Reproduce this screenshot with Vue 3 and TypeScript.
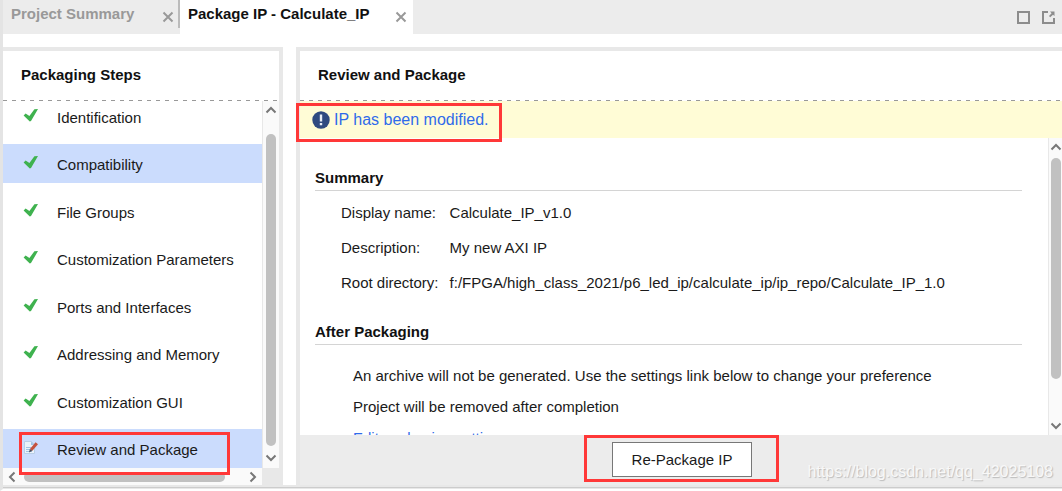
<script setup lang="ts">
import { ref } from 'vue'

interface Step {
  name: string
  done: boolean
}

const steps: Step[] = [
  { name: 'Identification', done: true },
  { name: 'Compatibility', done: true },
  { name: 'File Groups', done: true },
  { name: 'Customization Parameters', done: true },
  { name: 'Ports and Interfaces', done: true },
  { name: 'Addressing and Memory', done: true },
  { name: 'Customization GUI', done: true },
  { name: 'Review and Package', done: false },
]

const highlighted = ref<string[]>(['Compatibility', 'Review and Package'])

const summary = [
  { label: 'Display name:', value: 'Calculate_IP_v1.0' },
  { label: 'Description:', value: 'My new AXI IP' },
  { label: 'Root directory:', value: 'f:/FPGA/high_class_2021/p6_led_ip/calculate_ip/ip_repo/Calculate_IP_1.0' },
]

function select(name: string) {
  highlighted.value = [name]
}
</script>

<template>
  <div class="window">
    <header class="tabs">
      <div class="tab">
        <button class="tab-name">Project Summary</button>
        <button class="icon-btn close" aria-label="Close Project Summary">
          <svg width="12" height="12" viewBox="0 0 12 12"><path d="M1.5 1.5l9 9M10.5 1.5l-9 9" /></svg>
        </button>
      </div>
      <div class="tab active">
        <button class="tab-name">Package IP - Calculate_IP</button>
        <button class="icon-btn close" aria-label="Close Package IP">
          <svg width="12" height="12" viewBox="0 0 12 12"><path d="M1.5 1.5l9 9M10.5 1.5l-9 9" /></svg>
        </button>
      </div>
      <div class="tools">
        <button class="icon-btn" aria-label="Maximize">
          <svg width="13" height="13" viewBox="0 0 13 13"><path d="M1 1h11v11H1z" /></svg>
        </button>
        <button class="icon-btn" aria-label="Float">
          <svg width="13" height="13" viewBox="0 0 13 13">
            <path d="M6 1H1v11h11V7" />
            <path class="solid" d="M8 0.5h4.5V5L11 3.8 8.2 6.2 7 5l2.6-2.8z" />
          </svg>
        </button>
      </div>
    </header>

    <main class="panels">
      <section class="panel steps">
        <h2>Packaging Steps</h2>
        <div class="scroll-row">
          <div class="viewport">
            <ul>
              <li v-for="step in steps" :key="step.name">
                <button class="step" :class="{ on: highlighted.includes(step.name) }" @click="select(step.name)">
                  <svg v-if="step.done" width="16" height="16" viewBox="0 0 16 16">
                    <path fill="#3fb24f" d="M.6 7.400L2.600 5.500 6.400 8l5-6.700 3.600-.2L8 13l-1.200.6z" />
                  </svg>
                  <svg v-else width="16" height="16" viewBox="0 0 16 16">
                    <path fill="#e9f2fa" stroke="#b9cfe6" d="M1.5 1.5h7l3 3v9h-10z" />
                    <path fill="#9fc3e4" d="M8 1.5v3.5h3.5zM3 7h5v1H3zM3 9h4v1H3zM3 11h6v1H3z" />
                    <path fill="#c4523d" d="M12.6 2.2l2.4 2-5.6 6.6-2.5-1.9z" />
                    <path fill="#4e4a55" d="M6.9 8.9l2.5 1.9L6 12.6z" />
                  </svg>
                  <span>{{ step.name }}</span>
                </button>
              </li>
            </ul>
          </div>
          <div class="vbar">
            <svg width="12" height="8" viewBox="0 0 12 8"><path d="M1.5 6.5L6 2l4.500 4.500" /></svg>
            <i class="thumb"></i>
            <svg width="12" height="8" viewBox="0 0 12 8"><path d="M1.500 1.500L6 6l4.500-4.500" /></svg>
          </div>
        </div>
        <div class="hbar">
          <div class="track">
            <svg width="8" height="12" viewBox="0 0 8 12"><path d="M6.500 1.500L2 6l4.500 4.500" /></svg>
            <i class="thumb"></i>
            <svg width="8" height="12" viewBox="0 0 8 12"><path d="M1.500 1.500L6 6l-4.500 4.500" /></svg>
          </div>
        </div>
        <i class="mark mark-step"></i>
      </section>

      <section class="panel review">
        <h2>Review and Package</h2>
        <div class="banner">
          <svg width="18" height="18" viewBox="0 0 18 18">
            <circle cx="9" cy="9" r="8.700" fill="#2f4a80" />
            <path fill="#e8edf5" d="M7.800 3.500h2.400v7H7.800zM7.800 12h2.400v2.300H7.800z" />
          </svg>
          <a href="#">IP has been modified.</a>
          <i class="mark mark-banner"></i>
        </div>
        <div class="scroll-row">
          <div class="viewport body">
            <h3>Summary</h3>
            <dl>
              <template v-for="row in summary" :key="row.label">
                <dt>{{ row.label }}</dt>
                <dd>{{ row.value }}</dd>
              </template>
            </dl>
            <h3>After Packaging</h3>
            <div class="notes">
              <p>An archive will not be generated. Use the settings link below to change your preference</p>
              <p>Project will be removed after completion</p>
              <p><a href="#">Edit packaging settings</a></p>
            </div>
          </div>
          <div class="vbar">
            <svg width="12" height="8" viewBox="0 0 12 8"><path d="M1.500 6.500L6 2l4.500 4.500" /></svg>
            <i class="thumb"></i>
            <svg width="12" height="8" viewBox="0 0 12 8"><path d="M1.500 1.500L6 6l4.500-4.500" /></svg>
          </div>
        </div>
        <footer>
          <div class="action">
            <button class="primary">Re-Package IP</button>
            <i class="mark mark-action"></i>
          </div>
          <span class="watermark">https://blog.csdn.net/qq_42025108</span>
        </footer>
      </section>
    </main>
    <div class="base"></div>
  </div>
</template>

<style>
body {
  background: #fff;
}
</style>

<style scoped>
* {
  box-sizing: border-box;
}

.window {
  display: flex;
  flex-direction: column;
  height: 100vh;
  border-left: 3px solid #e4e4e4;
  border-bottom: 2px solid #fff;
  background: #fff;
  color: #1a1a1a;
  font: 15px/20px "Liberation Sans", Arial, sans-serif;
  overflow: hidden;
}

button {
  padding: 0;
  border: 0;
  background: none;
  color: inherit;
  font: inherit;
  text-align: left;
}

ul,
dl,
dd,
p,
h2,
h3 {
  margin: 0;
  padding: 0;
  list-style: none;
}

a {
  color: #2f6bea;
  text-decoration: none;
}

svg {
  display: block;
  flex: none;
}

.tabs {
  display: flex;
  flex: none;
  height: 34px;
  background: #ececec;
}

.tab {
  display: flex;
  justify-content: space-between;
  width: 177px;
  padding: 4px 6px 0 8px;
  color: #999;
  font-weight: bold;
  background: linear-gradient(#bbb, #bbb) right top / 2px 28px no-repeat;
}

.tab.active {
  width: 233px;
  background: #fff;
  color: #111;
}

.tab-name {
  height: 20px;
}

.icon-btn svg {
  fill: none;
  stroke: #8c8c8c;
  stroke-width: 2;
}

.icon-btn .solid {
  fill: #8c8c8c;
  stroke: none;
}

.close {
  height: 26px;
}

.icon-btn.close svg {
  stroke: #999;
}

.tools {
  display: flex;
  align-items: center;
  gap: 12px;
  margin-left: auto;
  padding-right: 7px;
}

.panels {
  display: flex;
  flex: 1;
  gap: 13px;
  min-height: 0;
  padding-top: 13px;
}

.panel {
  position: relative;
  display: flex;
  flex-direction: column;
  border-top: 4px solid #e8e8e8;
}

.steps {
  flex: none;
  width: 280px;
  border-right: 4px solid #e8e8e8;
}

.review {
  flex: 1;
  min-width: 0;
  border-left: 4px solid #e8e8e8;
}

h2 {
  flex: none;
  height: 50px;
  padding: 14px 18px 0;
  font-size: 15px;
  line-height: 20px;
  color: #111;
  background: repeating-linear-gradient(90deg, #999 0 4px, transparent 4px 9px) left bottom / 100% 1px no-repeat;
}

.scroll-row {
  display: flex;
  flex: 1;
  min-height: 0;
}

.viewport {
  flex: 1;
  min-width: 0;
  overflow: hidden;
}

.steps ul {
  display: flex;
  flex-direction: column;
  justify-content: space-between;
  height: calc(100% + 4px);
  margin-top: -4px;
}

.step {
  display: flex;
  gap: 18px;
  width: 100%;
  height: 39px;
  padding: 11px 0 8px 20px;
}

.step.on {
  background: #cbdcfd;
}

.vbar {
  display: flex;
  flex: none;
  flex-direction: column;
  align-items: center;
  gap: 20px;
  width: 17px;
  padding: 5px 0;
  border-left: 1px solid #e8e8e8;
  background: #fafafa;
}

.vbar svg,
.hbar svg {
  fill: none;
  stroke: #777;
  stroke-width: 2;
}

.vbar .thumb {
  flex: 1;
  width: 10px;
  border-radius: 5px;
  background: #c1c1c1;
}

.steps .vbar {
  padding-bottom: 6px;
}

.steps .vbar .thumb {
  margin-bottom: -12px;
}

.hbar {
  display: flex;
  flex: none;
  height: 17px;
  background: #e8e8e8;
}

.track {
  display: flex;
  flex: 1;
  align-items: center;
  gap: 8px;
  margin-right: 17px;
  padding: 0 5px;
  background: #fafafa;
}

.track .thumb {
  flex: 1;
  height: 10px;
  margin-right: 16px;
  border-radius: 5px;
  background: #c1c1c1;
}

.banner {
  position: relative;
  display: flex;
  flex: none;
  align-items: center;
  gap: 4px;
  height: 37px;
  padding-left: 12px;
  background: #fffcd6;
  font-size: 16px;
}

.body {
  padding: 30px 26px 0 15px;
}

.review .vbar {
  width: 14px;
  gap: 7px;
  padding: 5px 0;
}

.review .vbar .thumb {
  margin-bottom: 36px;
}

h3 {
  padding-bottom: 2px;
  border-bottom: 1px solid #d4d4d4;
  font-size: 15px;
  line-height: 20px;
  color: #111;
}

dl {
  display: grid;
  grid-template-columns: max-content 1fr;
  gap: 15px 11px;
  padding: 12px 0 29px 26px;
}

.notes {
  display: flex;
  flex-direction: column;
  gap: 11px;
  padding: 21px 0 0 38px;
  white-space: nowrap;
}

footer {
  position: relative;
  display: flex;
  flex: none;
  justify-content: center;
  height: 50px;
  padding: 7px 0 0 2px;
  background: #ececec;
}

.action {
  position: relative;
  height: 35px;
}

.primary {
  width: 140px;
  height: 35px;
  border: 1px solid #777;
  background: #fff;
  text-align: center;
}

.watermark {
  position: absolute;
  right: 9px;
  bottom: 3px;
  color: #f8f8f8;
  font-size: 16px;
  text-shadow: 1px 1px 1px #bbb;
}

.base {
  flex: none;
  height: 4px;
  border-top: 2px solid #e8e8e8;
  border-bottom: 1px solid #e8e8e8;
  background: #ccc;
}

.mark {
  position: absolute;
  border: 3px solid #ff3838;
  pointer-events: none;
}

.mark-step {
  left: 16px;
  bottom: 10px;
  width: 211px;
  height: 43px;
}

.mark-banner {
  left: -4px;
  top: 2px;
  width: 206px;
  height: 39px;
}

.mark-action {
  inset: -7px -27px -5px -28px;
}
</style>
